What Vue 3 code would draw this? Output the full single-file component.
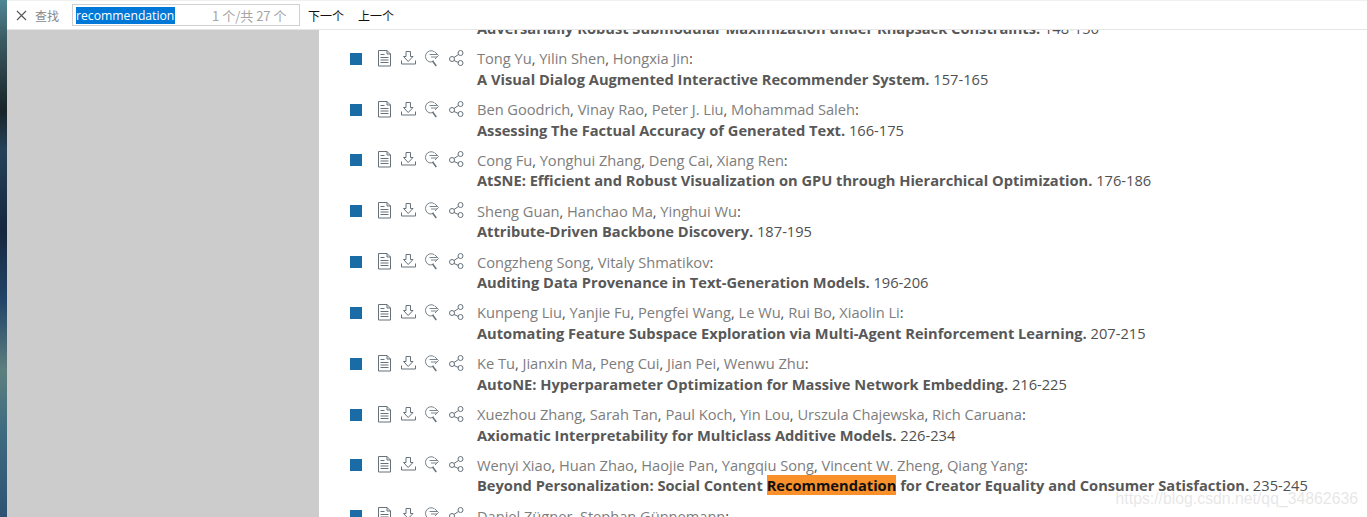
<script setup>
const rows = [
  { names: [], t: 'Adversarially Robust Submodular Maximization under Knapsack Constraints.', p: '148-156' },
  { names: ['Tong Yu', 'Yilin Shen', 'Hongxia Jin'], t: 'A Visual Dialog Augmented Interactive Recommender System.', p: '157-165' },
  { names: ['Ben Goodrich', 'Vinay Rao', 'Peter J. Liu', 'Mohammad Saleh'], t: 'Assessing The Factual Accuracy of Generated Text.', p: '166-175' },
  { names: ['Cong Fu', 'Yonghui Zhang', 'Deng Cai', 'Xiang Ren'], t: 'AtSNE: Efficient and Robust Visualization on GPU through Hierarchical Optimization.', p: '176-186' },
  { names: ['Sheng Guan', 'Hanchao Ma', 'Yinghui Wu'], t: 'Attribute-Driven Backbone Discovery.', p: '187-195' },
  { names: ['Congzheng Song', 'Vitaly Shmatikov'], t: 'Auditing Data Provenance in Text-Generation Models.', p: '196-206' },
  { names: ['Kunpeng Liu', 'Yanjie Fu', 'Pengfei Wang', 'Le Wu', 'Rui Bo', 'Xiaolin Li'], t: 'Automating Feature Subspace Exploration via Multi-Agent Reinforcement Learning.', p: '207-215' },
  { names: ['Ke Tu', 'Jianxin Ma', 'Peng Cui', 'Jian Pei', 'Wenwu Zhu'], t: 'AutoNE: Hyperparameter Optimization for Massive Network Embedding.', p: '216-225' },
  { names: ['Xuezhou Zhang', 'Sarah Tan', 'Paul Koch', 'Yin Lou', 'Urszula Chajewska', 'Rich Caruana'], t: 'Axiomatic Interpretability for Multiclass Additive Models.', p: '226-234' },
  { names: ['Wenyi Xiao', 'Huan Zhao', 'Haojie Pan', 'Yangqiu Song', 'Vincent W. Zheng', 'Qiang Yang'], t: 'Beyond Personalization: Social Content ', hit: 'Recommendation', after: ' for Creator Equality and Consumer Satisfaction.', p: '235-245' },
  { names: ['Daniel Zügner', 'Stephan Günnemann'], t: '', p: '' },
]
</script>

<template>
  <div class="page">
    <div class="strip"></div>
    <div class="side"></div>
    <main class="main">
      <ul class="list">
        <li v-for="(r, i) in rows" :key="i" class="row">
          <span class="square"></span>
          <div class="icons">
            <svg width="15" height="17" viewBox="0 0 15 17" fill="none" stroke="#66717a" stroke-width="1">
              <path d="M.5 .5h8.500l3.500 3.500v12h-12z" />
              <path d="M9 .5v3.500h3.500M2.500 4.500h4M2.500 7.500h8M2.500 10h8M2.500 12.500h8" />
            </svg>
            <svg width="15" height="16" viewBox="0 0 15 16" fill="none" stroke="#66717a" stroke-width="1">
              <path d="M5 1.500h4.500v5h2.500L7.200 11.500 2.500 6.500H5z" />
              <path d="M.5 10.500v3.500h14v-3.500" />
            </svg>
            <svg width="17" height="17" viewBox="0 0 17 17" fill="none" stroke="#7a848b" stroke-width="1">
              <path d="M10.500 1.800A5.700 5.700 0 1 0 6 12a5.700 5.700 0 0 0 3.500-1.200" />
              <path d="M8.500 11l3.800 5" stroke="#66717a" stroke-width="1.500" />
              <path d="M5.500 4.500h8M11 2l3.500 3.500L11 9M13 7H7" />
            </svg>
            <svg width="16" height="17" viewBox="0 0 16 17" fill="none" stroke="#66717a" stroke-width="1">
              <circle cx="3" cy="9" r="2.500" />
              <circle cx="11.500" cy="3" r="2.500" />
              <circle cx="11.500" cy="13" r="2.500" />
              <path d="M5 7.500l4.500-3M5 10.500l4.500 2" />
            </svg>
          </div>
          <div class="cite">
            <div class="authors"><template v-for="(n, j) in r.names" :key="j"><span class="author">{{ n }}</span>{{ j < r.names.length - 1 ? ', ' : ':' }}</template></div>
            <div class="title"><b>{{ r.t }}<mark v-if="r.hit" class="hit">{{ r.hit }}</mark>{{ r.after }}</b> {{ r.p }}</div>
          </div>
        </li>
      </ul>
    </main>

    <div class="findbar">
      <svg class="close" width="11" height="11" viewBox="0 0 11 11" stroke="#555" stroke-width="1.1"><path d="M1 1l9 9M10 1l-9 9" /></svg>
      <span class="findlabel">查找</span>
      <div class="findbox">
        <span class="query">recommendation</span>
        <span class="count">1 个/共 27 个</span>
      </div>
      <span class="nav first">下一个</span>
      <span class="nav">上一个</span>
    </div>
    <div class="watermark">https://blog.csdn.net/qq_34862636</div>
  </div>
</template>

<style>
html, body { margin: 0; overflow: hidden; background: #fff; }
</style>

<style scoped>
.page {
  position: relative;
  width: 1367px;
  height: 517px;
  overflow: hidden;
  display: flex;
  background: #fff;
  font-family: "Open Sans", "Noto Sans CJK SC", sans-serif;
}
.strip {
  width: 7px;
  flex: none;
  background: linear-gradient(180deg, #4f8796 0, #3a5a62 40px, #182428 110px, #24425a 150px, #16263e 230px, #214468 300px, #5d7f7e 370px, #3e6b80 430px, #2f5272 517px);
}
.side { width: 312px; flex: none; background: #ccc; }
.main { flex: 1; overflow: hidden; }
.list {
  list-style: none;
  margin: -11px 0 0;
  padding: 0 0 0 31px;
}
.row {
  display: flex;
  height: 50.82px;
  align-items: flex-start;
}
.square {
  width: 12px;
  height: 12px;
  flex: none;
  margin-top: 13px;
  background: #196ca6;
}
.icons {
  display: flex;
  flex: none;
  width: 99px;
  margin-left: 16px;
  gap: 8px;
  margin-top: 10px;
  align-items: flex-start;
}
.cite {
  white-space: nowrap;
  font-size: 14.667px;
  line-height: 20.5px;
  padding-top: 9.5px;
  color: #505050;
}
.authors { color: #505050; line-height: 19.5px; min-height: 19.5px; letter-spacing: -0.03px; }
.author { color: #7d7d7d; }
.title b { font-weight: 700; color: #585858; }
.hit { background: #f9902a; color: #111; }
.findbar {
  position: absolute;
  left: 7px;
  top: 0;
  right: 0;
  height: 28px;
  background: #fff;
  border-top: 1px solid #f0f0f0;
  border-bottom: 1px solid #e6e6e6;
  display: flex;
  align-items: center;
  font-size: 12px;
}
.close { margin-left: 9px; flex: none; }
.findlabel { margin-left: 8px; color: #888; font-family: "Noto Sans CJK SC", sans-serif; }
.findbox {
  margin-left: 13px;
  width: 223px;
  height: 20px;
  border: 1px solid #d0d0d0;
  display: flex;
  align-items: center;
  padding-left: 3px;
}
.query {
  background: #0078d7;
  color: #fff;
  font-family: "Open Sans", sans-serif;
  font-size: 12.2px;
  width: 99px;
  height: 17px;
  line-height: 17px;
  overflow: hidden;
  white-space: nowrap;
  flex: none;
}
.count {
  margin-left: 37px;
  color: #a5a5a5;
  white-space: nowrap;
  font-size: 13px;
  font-family: "Noto Sans CJK SC", sans-serif;
}
.nav { margin-left: 14px; color: #111; font-family: "Noto Sans CJK SC", sans-serif; white-space: nowrap; }
.nav.first { margin-left: 8px; }
.watermark {
  position: absolute;
  right: 9px;
  top: 490px;
  font-family: "Liberation Sans", sans-serif;
  font-size: 15.800px;
  color: rgba(190, 190, 190, 0.38);
  white-space: nowrap;
}
</style>
